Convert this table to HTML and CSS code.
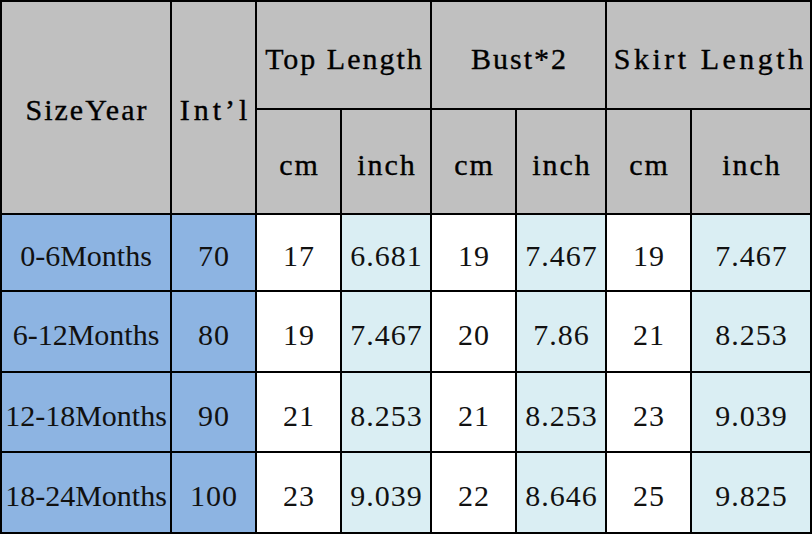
FILE: index.html
```html
<!DOCTYPE html>
<html lang="en">
<head>
<meta charset="utf-8">
<title>Size Chart</title>
<link rel="stylesheet" href="styles.css">
</head>
<body>
<div class="chart">
  <div class="cell head span-r2 size">SizeYear</div>
  <div class="cell head span-r2 size wide">Int’l</div>
  <div class="cell head span-c2 group">Top Length</div>
  <div class="cell head span-c2 group">Bust*2</div>
  <div class="cell head span-c2 group wider">Skirt Length</div>
  <div class="cell head unit">cm</div>
  <div class="cell head unit">inch</div>
  <div class="cell head unit">cm</div>
  <div class="cell head unit">inch</div>
  <div class="cell head unit">cm</div>
  <div class="cell head unit">inch</div>

  <div class="cell blue label">0-6Months</div>
  <div class="cell blue">70</div>
  <div class="cell white">17</div>
  <div class="cell light">6.681</div>
  <div class="cell white">19</div>
  <div class="cell light">7.467</div>
  <div class="cell white">19</div>
  <div class="cell light">7.467</div>

  <div class="cell blue label">6-12Months</div>
  <div class="cell blue">80</div>
  <div class="cell white">19</div>
  <div class="cell light">7.467</div>
  <div class="cell white">20</div>
  <div class="cell light">7.86</div>
  <div class="cell white">21</div>
  <div class="cell light">8.253</div>

  <div class="cell blue label">12-18Months</div>
  <div class="cell blue">90</div>
  <div class="cell white">21</div>
  <div class="cell light">8.253</div>
  <div class="cell white">21</div>
  <div class="cell light">8.253</div>
  <div class="cell white">23</div>
  <div class="cell light">9.039</div>

  <div class="cell blue label">18-24Months</div>
  <div class="cell blue">100</div>
  <div class="cell white">23</div>
  <div class="cell light">9.039</div>
  <div class="cell white">22</div>
  <div class="cell light">8.646</div>
  <div class="cell white">25</div>
  <div class="cell light">9.825</div>
</div>
</body>
</html>
```

FILE: styles.css
```css
html, body {
  margin: 0;
  padding: 0;
  background: #ffffff;
}

.chart {
  display: grid;
  grid-template-columns: 168px 83px 83px 88px 83px 88px 83px 118px;
  grid-template-rows: 106px 103px 75px 79px 78px 79px;
  gap: 2px;
  padding: 2px;
  width: 812px;
  box-sizing: border-box;
  background: #000000;
  font-family: "Liberation Serif", "Times New Roman", serif;
  font-size: 30px;
  color: #111111;
}

.cell {
  display: flex;
  align-items: center;
  justify-content: center;
  white-space: nowrap;
  box-sizing: border-box;
  padding-top: 7px;
  letter-spacing: 1px;
  padding-left: 1px;
}

.head {
  background: #c0c0c0;
  color: #000000;
  -webkit-text-stroke: 0.35px #000000;
  letter-spacing: 2px;
  padding-left: 2px;
}

.span-r2 { grid-row: span 2; padding-top: 5px; }
.span-c2 { grid-column: span 2; padding-top: 8px; }
.unit { padding-top: 6px; }

.wide { letter-spacing: 4px; padding-left: 4px; }
.wider { letter-spacing: 3.5px; padding-left: 3.5px; }

.blue { background: #8db4e2; }
.light { background: #daeef3; }
.white { background: #ffffff; }

.label {
  letter-spacing: 0;
  padding-left: 0;
}
```
